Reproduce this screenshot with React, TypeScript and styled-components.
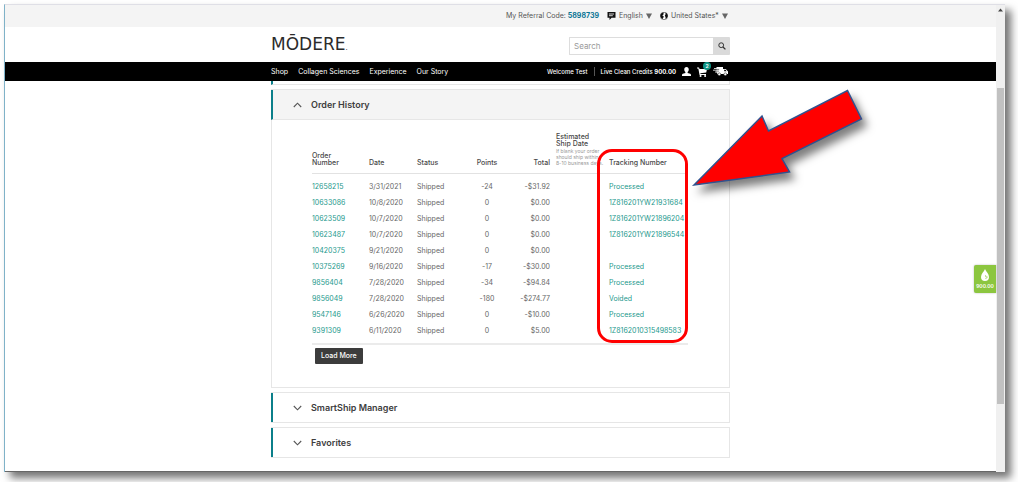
import React from "react";
import styled, { createGlobalStyle } from "styled-components";

const teal = "#0b7f8a";
const link = "#23988c";
const line = "#e6e6e6";

const GlobalStyle = createGlobalStyle`
  *, *::before, *::after { box-sizing: border-box; }
  body { margin: 0; background: #fff; color: #444; font-family: Inter, "Open Sans", sans-serif; font-size: 7px; line-height: 8px; }
  button, input, select { font: inherit; color: inherit; margin: 0; }
  a { color: inherit; text-decoration: none; }
  svg { display: block; flex: none; }
`;

const Window = styled.div`
  display: grid;
  grid-template-columns: 1fr 9px;
  min-height: calc(100vh - 15px);
  margin: 4px 13px 11px 4px;
  background: #fff;
  border-top: 1px solid #dfdfe6;
  border-left: 1px solid #7fb2c8;
  box-shadow: 6px 6px 8px rgba(0, 0, 0, 0.55);
`;

const Page = styled.div`
  position: relative;
  border-bottom: 1px solid #666;
`;

const Track = styled.div`
  display: flex;
  flex-direction: column;
  align-items: stretch;
  background: #f0f0f0;
  padding: 3px 1px 68px;
`;

const TrackArrow = styled.svg`
  align-self: center;
  margin-bottom: 76px;
`;

const Thumb = styled.div`
  flex: 1;
  background: #c1c1c1;
`;

const Container = styled.div`
  width: 100%;
  max-width: 459px;
  margin: 0 auto;
`;

const UtilityBar = styled.div`
  background: #f4f4f4;
`;

const UtilityRow = styled(Container)`
  display: flex;
  align-items: center;
  justify-content: flex-end;
  gap: 8px;
  height: 22px;
  padding-right: 2px;
  color: #555;
`;

const ReferralLink = styled.a`
  color: #0a7594;
  font-weight: 700;
`;

const Picker = styled.label`
  display: flex;
  align-items: center;
  gap: 3px;
`;

const PickerSelect = styled.select`
  appearance: none;
  border: 0;
  padding: 0;
  background: transparent;
`;

const Header = styled(Container)`
  display: flex;
  align-items: center;
  justify-content: space-between;
  height: 35px;
  padding-top: 2px;
`;

const Logo = styled.a`
  display: flex;
  align-items: baseline;
  color: #2b2b2b;
  font-family: "DejaVu Sans", sans-serif;
  font-size: 17px;
  line-height: 20px;
`;

const LogoDot = styled.span`
  font-size: 7px;
`;

const SearchForm = styled.form`
  display: flex;
  width: 161px;
  height: 18px;
`;

const SearchInput = styled.input`
  flex: 1;
  min-width: 0;
  border: 1px solid #ddd;
  border-right: 0;
  border-radius: 1px 0 0 1px;
  padding: 0 4px;
  font-size: 8px;
  &::placeholder { color: #999; opacity: 1; }
`;

const SearchButton = styled.button`
  display: grid;
  place-items: center;
  width: 17px;
  padding: 0;
  border: 0;
  border-radius: 0 1px 1px 0;
  background: #dadada;
`;

const NavBar = styled.nav`
  background: #000;
  color: #fff;
`;

const NavRow = styled(Container)`
  display: flex;
  align-items: center;
  justify-content: space-between;
  height: 19px;
  padding-right: 2px;
`;

const NavGroup = styled.div<{ $gap: number; $small?: boolean }>`
  display: flex;
  align-items: center;
  gap: ${(p) => p.$gap}px;
  font-weight: ${(p) => (p.$small ? 500 : 400)};
  font-size: ${(p) => (p.$small ? 6 : 7)}px;
`;

const Divider = styled.span`
  width: 1px;
  height: 9px;
  background: #555;
`;

const CartLink = styled.a`
  position: relative;
`;

const CartBadge = styled.span`
  position: absolute;
  top: -5px;
  right: -4px;
  width: 8px;
  height: 8px;
  border-radius: 50%;
  background: #0f9585;
  font-size: 5px;
  font-weight: 700;
  line-height: 8px;
  text-align: center;
`;

const Panels = styled(Container)`
  display: flex;
  flex-direction: column;
  gap: 4px;
  padding-bottom: 13px;
`;

const PanelTail = styled.div`
  height: 4px;
  border: solid ${line};
  border-width: 0 1px 1px;
  border-left: 2px solid ${teal};
`;

const Panel = styled.section`
  border: 1px solid ${line};
`;

const PanelHeading = styled.h2<{ $open?: boolean }>`
  margin: 0 0 0 -1px;
  border-left: 2px solid ${teal};
  border-bottom: ${(p) => (p.$open ? `1px solid ${line}` : 0)};
  background: ${(p) => (p.$open ? "#f4f4f4" : "#fff")};
`;

const PanelToggle = styled.button`
  display: flex;
  align-items: center;
  gap: 9px;
  width: 100%;
  height: 29px;
  padding: 0 20px;
  border: 0;
  background: transparent;
  color: #3d3d3d;
  font-size: 9px;
  line-height: 12px;
  font-weight: 600;
`;

const PanelBody = styled.div`
  padding: 11px 41px 23px 40px;
`;

const TableWrap = styled.div`
  position: relative;
  border-bottom: 2px solid #ebebeb;
  padding-bottom: 4px;
`;

const Table = styled.table`
  width: 100%;
  table-layout: fixed;
  border-collapse: separate;
  border-spacing: 0;
  color: #666;
  tbody::before { content: ""; display: block; height: 5px; }
`;

const Th = styled.th<{ $align?: string; $inset?: boolean }>`
  padding: 2px 0 7px ${(p) => (p.$inset ? 6 : 0)}px;
  border-bottom: 1px solid #e2e2e2;
  color: #484848;
  font-weight: 500;
  line-height: 7px;
  text-align: ${(p) => p.$align || "left"};
  vertical-align: bottom;
  white-space: nowrap;
`;

const Hint = styled.small`
  display: block;
  margin-top: 1px;
  color: #999;
  font-size: 5px;
  line-height: 6px;
  font-weight: 400;
`;

const Td = styled.td<{ $align?: string }>`
  height: 16px;
  padding: 0;
  text-align: ${(p) => p.$align || "left"};
  white-space: nowrap;
  a { color: ${link}; }
`;

const LoadMore = styled.button`
  display: block;
  height: 16px;
  margin: 3px 0 0 3px;
  padding: 0 6px;
  border: 0;
  border-radius: 1px;
  background: #3c3c3c;
  color: #fff;
  font-weight: 500;
`;

const Highlight = styled.div`
  position: absolute;
  top: 18px;
  right: 0;
  bottom: 0;
  width: 91px;
  border: 3px solid #f00;
  border-radius: 15px;
`;

const Arrow = styled.svg`
  position: absolute;
  top: -46px;
  left: 376px;
  z-index: 1;
  overflow: visible;
  filter: drop-shadow(5px 7px 4px rgba(0, 0, 0, 0.5));
`;

const CreditsTab = styled.a`
  position: absolute;
  top: 260px;
  right: 0;
  display: flex;
  flex-direction: column;
  align-items: center;
  justify-content: center;
  gap: 2px;
  width: 22px;
  height: 28px;
  border-radius: 2px 0 0 2px;
  background: #8cc63f;
  box-shadow: 0 0 2px rgba(0, 0, 0, 0.3);
  color: #fff;
  font-size: 5px;
  line-height: 6px;
  font-weight: 600;
`;

const Triangle = () => (
  <svg width="6" height="6" viewBox="0 0 6 6" aria-hidden="true">
    <path d="M0 .5h6L3 6z" fill="#666" />
  </svg>
);

const Chevron = ({ up }: { up?: boolean }) => (
  <svg width="9" height="6" viewBox="0 0 9 6" fill="none" stroke="#555" strokeWidth="1.1" aria-hidden="true">
    <path d={up ? "M.8 5 4.5 1.2 8.2 5" : "M.8 1 4.5 4.8 8.2 1"} />
  </svg>
);

const SpeechIcon = () => (
  <svg width="9" height="8" viewBox="0 0 9 8" aria-hidden="true">
    <path d="M.5 0h8v5.7H4.6L2.5 8V5.7h-2z" fill="#111" />
    <path d="M2 2h5M2 3.7h3.8" stroke="#fff" strokeWidth=".8" />
  </svg>
);

const GlobeIcon = () => (
  <svg width="8" height="8" viewBox="0 0 8 8" aria-hidden="true">
    <circle cx="4" cy="4" r="3.7" fill="#fff" stroke="#111" strokeWidth=".5" />
    <path d="M.5 2.4 2 .7l1.700-.3-.3 1 .5.6-1.100.9-.5.7 1.400.7-.2 1L2.700 7 1.200 6 .4 4.200zM5.200.5l1.500.8 1 1.800v1.500l-.9 1.400-1.300 1 .1-2L4.900 4l.1-1.300.8-.5z" fill="#111" />
  </svg>
);

const SearchIcon = () => (
  <svg width="8" height="8" viewBox="0 0 8 8" fill="none" stroke="#333" aria-hidden="true">
    <circle cx="3.200" cy="3.200" r="2.400" strokeWidth="1" />
    <path d="m5 5 2.400 2.400" strokeWidth="1.300" />
  </svg>
);

const PersonIcon = () => (
  <svg width="9" height="9" viewBox="0 0 8 8" fill="#fff" aria-hidden="true">
    <path d="M4 0c1.300 0 2 .9 2 2.200 0 1-.4 1.800-1 2.300v.8l2.300.8c.5.2.7.6.7 1.200V8H0v-.7c0-.6.2-1 .7-1.200L3 5.300v-.8C2.400 4 2 3.200 2 2.200 2 .9 2.700 0 4 0z" />
  </svg>
);

const CartIcon = () => (
  <svg width="10" height="10" viewBox="0 0 9 9" fill="#fff" aria-hidden="true">
    <path d="M0 .5h1.800l.5 1.200H9L8.300 5 3 5.600l.1.700h5v.9H2.300L1.200 1.400H0z" />
    <circle cx="3.200" cy="8.100" r=".9" />
    <circle cx="7.300" cy="8.100" r=".9" />
  </svg>
);

const TruckIcon = () => (
  <svg width="15" height="9" viewBox="0 0 15 9" aria-hidden="true">
    <path d="M3.500 0H10v7H4.200V5.500h-.7zM10 2h2.800L15 4.500V7h-5z" fill="#fff" />
    <path d="M1 1.500h3M0 3.200h4.200M2 5h2.500" stroke="#fff" strokeWidth=".8" />
    <path d="M3.200 2.400h3M3.600 4.100h2.300" stroke="#000" strokeWidth=".5" />
    <path d="M11.200 2.800h1.300l1.100 1.500h-2.400z" fill="#000" />
    <circle cx="6.300" cy="7.300" r="1.400" fill="#fff" stroke="#000" strokeWidth=".5" />
    <circle cx="12.300" cy="7.300" r="1.400" fill="#fff" stroke="#000" strokeWidth=".5" />
  </svg>
);

const DropIcon = () => (
  <svg width="8" height="12" viewBox="0 0 8 12" aria-hidden="true">
    <path d="M4 0C5 2.600 8 5 8 8a4 4 0 0 1-8 0C0 5 3 2.600 4 0z" fill="#fff" />
    <path d="M4.600 6v1.800h1.700A2 2 0 0 1 4.300 9.600" fill="none" stroke="#8cc63f" strokeWidth=".6" />
  </svg>
);

const orders = [
  ["12658215", "3/31/2021", "-24", "-$31.92", "Processed"],
  ["10633086", "10/8/2020", "0", "$0.00", "1Z816201YW21931684"],
  ["10623509", "10/7/2020", "0", "$0.00", "1Z816201YW21896204"],
  ["10623487", "10/7/2020", "0", "$0.00", "1Z816201YW21896544"],
  ["10420375", "9/21/2020", "0", "$0.00", ""],
  ["10375269", "9/16/2020", "-17", "-$30.00", "Processed"],
  ["9856404", "7/28/2020", "-34", "-$94.84", "Processed"],
  ["9856049", "7/28/2020", "-180", "-$274.77", "Voided"],
  ["9547146", "6/26/2020", "0", "-$10.00", "Processed"],
  ["9391309", "6/11/2020", "0", "$5.00", "1Z8162010315498583"],
];

const columnWidths = [57, 48, 49, 42, 42, 59, 79];

const ClosedPanel = ({ title }: { title: string }) => (
  <Panel>
    <PanelHeading>
      <PanelToggle type="button" aria-expanded={false}>
        <Chevron />
        {title}
      </PanelToggle>
    </PanelHeading>
  </Panel>
);

const OrderTable = () => (
  <Table>
    <colgroup>
      {columnWidths.map((w, i) => (
        <col key={i} width={w} />
      ))}
    </colgroup>
    <thead>
      <tr>
        <Th>Order<br />Number</Th>
        <Th>Date</Th>
        <Th>Status</Th>
        <Th $align="center">Points</Th>
        <Th $align="right">Total</Th>
        <Th $inset>
          Estimated<br />Ship Date
          <Hint>If blank your order<br />should ship within<br />8-10 business days.</Hint>
        </Th>
        <Th>Tracking Number</Th>
      </tr>
    </thead>
    <tbody>
      {orders.map(([id, date, points, total, tracking]) => (
        <tr key={id}>
          <Td><a href="#order">{id}</a></Td>
          <Td>{date}</Td>
          <Td>Shipped</Td>
          <Td $align="center">{points}</Td>
          <Td $align="right">{total}</Td>
          <Td />
          <Td>{tracking && <a href="#tracking">{tracking}</a>}</Td>
        </tr>
      ))}
    </tbody>
  </Table>
);

export default function App() {
  return (
    <>
      <GlobalStyle />
      <Window>
        <Page>
          <UtilityBar>
            <UtilityRow>
              <span>My Referral Code: <ReferralLink href="#referral">5898739</ReferralLink></span>
              <Picker>
                <SpeechIcon />
                <PickerSelect aria-label="Language"><option>English</option></PickerSelect>
                <Triangle />
              </Picker>
              <Picker>
                <GlobeIcon />
                <PickerSelect aria-label="Country"><option>United States*</option></PickerSelect>
                <Triangle />
              </Picker>
            </UtilityRow>
          </UtilityBar>
          <Header as="header">
            <Logo href="#home">MŌDERE<LogoDot>.</LogoDot></Logo>
            <SearchForm role="search">
              <SearchInput type="text" placeholder="Search" aria-label="Search" />
              <SearchButton type="button" aria-label="Submit search"><SearchIcon /></SearchButton>
            </SearchForm>
          </Header>
          <NavBar>
            <NavRow>
              <NavGroup $gap={10}>
                <a href="#shop">Shop</a>
                <a href="#collagen">Collagen Sciences</a>
                <a href="#experience">Experience</a>
                <a href="#story">Our Story</a>
              </NavGroup>
              <NavGroup $gap={6} $small>
                <span>Welcome Test</span>
                <Divider />
                <span>Live Clean Credits <b>900.00</b></span>
                <a href="#account" aria-label="Account"><PersonIcon /></a>
                <CartLink href="#cart" aria-label="Cart">
                  <CartIcon />
                  <CartBadge>2</CartBadge>
                </CartLink>
                <a href="#smartship" aria-label="SmartShip"><TruckIcon /></a>
              </NavGroup>
            </NavRow>
          </NavBar>
          <Panels as="main">
            <PanelTail />
            <Panel>
              <PanelHeading $open>
                <PanelToggle type="button" aria-expanded>
                  <Chevron up />
                  Order History
                </PanelToggle>
              </PanelHeading>
              <PanelBody>
                <TableWrap>
                  <OrderTable />
                  <Highlight />
                  <Arrow width="180" height="100" viewBox="688 85 180 100" aria-hidden="true">
                    <path
                      d="M694 185 762 116 768.500 131 847.500 90.500 861.500 119 782 158.500 789.500 172z"
                      fill="#f00"
                      stroke="#2f528f"
                      strokeWidth="1.500"
                    />
                  </Arrow>
                </TableWrap>
                <LoadMore type="button">Load More</LoadMore>
              </PanelBody>
            </Panel>
            <ClosedPanel title="SmartShip Manager" />
            <ClosedPanel title="Favorites" />
          </Panels>
          <CreditsTab href="#credits"><DropIcon />900.00</CreditsTab>
        </Page>
        <Track aria-hidden="true">
          <TrackArrow width="5" height="4" viewBox="0 0 5 4"><path d="M0 3.500 2.500.5 5 3.500z" fill="#444" /></TrackArrow>
          <Thumb />
        </Track>
      </Window>
    </>
  );
}
